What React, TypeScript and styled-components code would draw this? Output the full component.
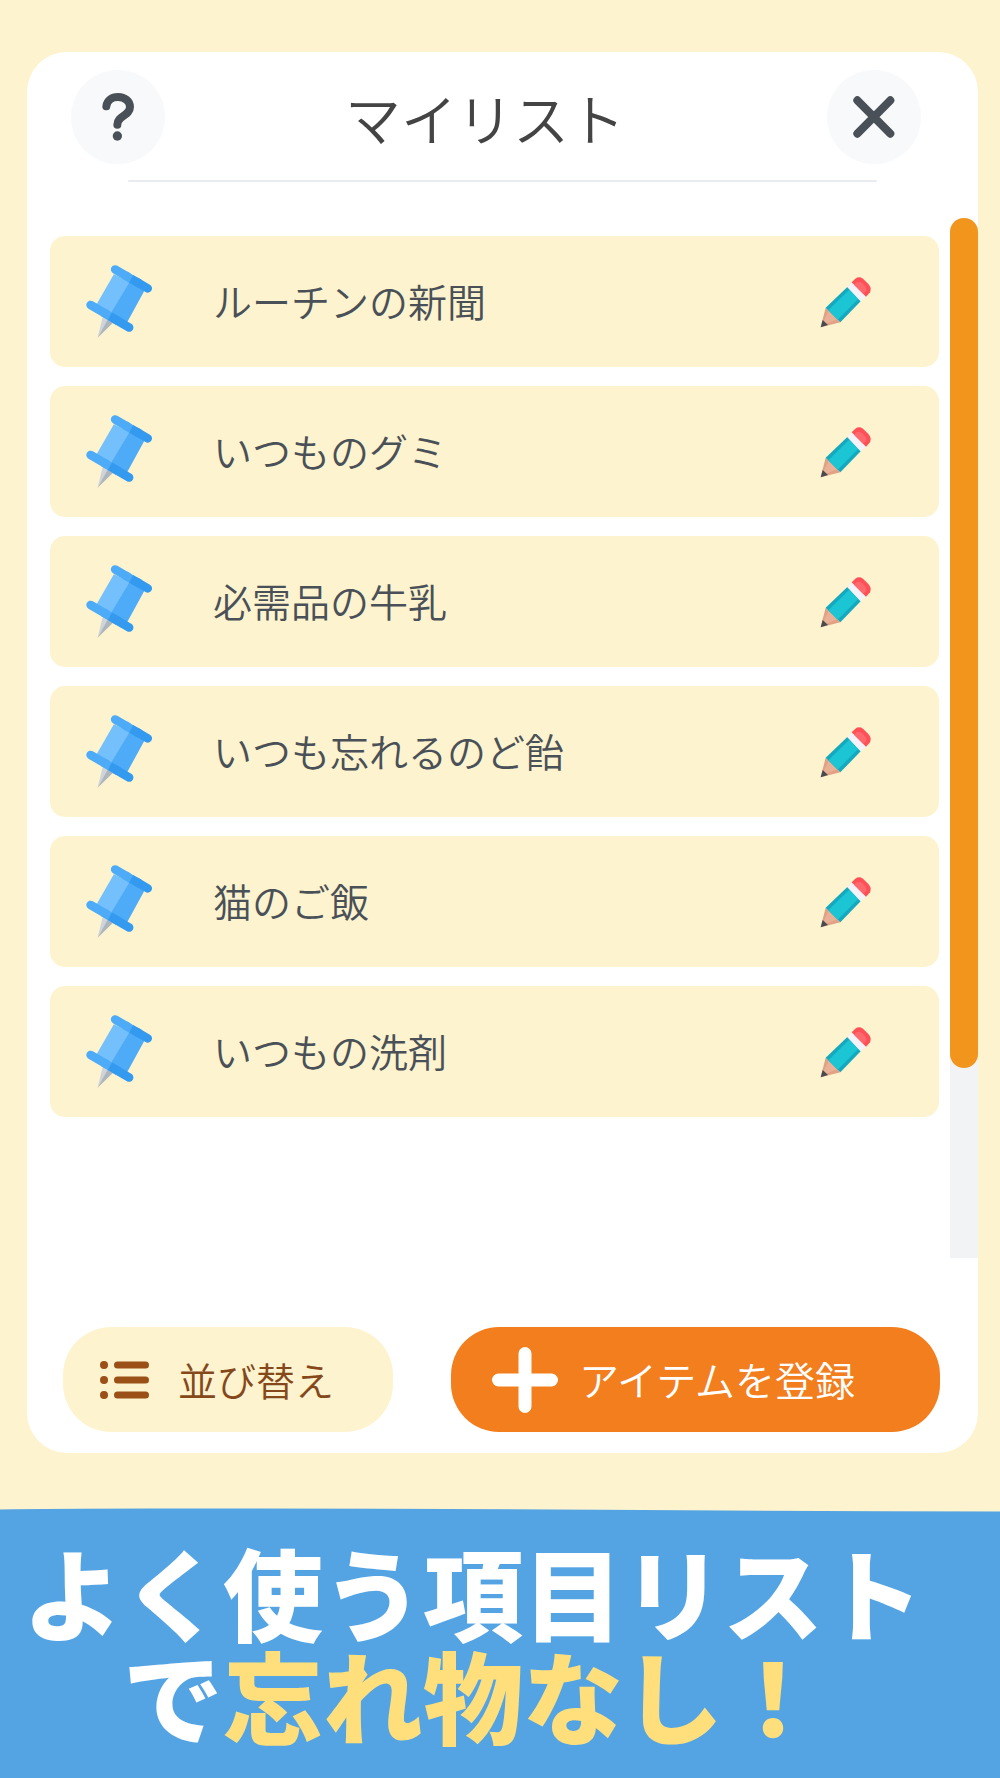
import React from "react";
import styled, { createGlobalStyle } from "styled-components";

const cream = "#fdf3ce";
const ink = "#495057";

const GlobalStyle = createGlobalStyle`
  *, *::before, *::after { box-sizing: border-box; }
  body {
    margin: 0;
    background: ${cream};
    font-family: "Noto Sans CJK JP", "Noto Sans", sans-serif;
    font-weight: 350;
  }
  button { border: 0; padding: 0; font: inherit; cursor: pointer; }
  svg { display: block; flex: none; }
`;

const Page = styled.div`
  display: flex;
  flex-direction: column;
  min-height: 100vh;
`;

const Card = styled.main`
  display: flex;
  flex-direction: column;
  margin: 52px 22px 55px 27px;
  padding-bottom: 21px;
  background: #fff;
  border-radius: 40px;
`;

const Header = styled.header`
  display: flex;
  align-items: center;
  padding: 18px 57px 16px 44px;
`;

const RoundButton = styled.button`
  width: 94px;
  height: 94px;
  border-radius: 50%;
  background: #f8f9fa;
`;

const Title = styled.h1`
  flex: 1;
  margin: 0;
  padding-right: 22px;
  text-align: center;
  font-size: 56px;
  line-height: 94px;
  font-weight: 350;
  color: #444;
`;

const Divider = styled.hr`
  align-self: stretch;
  height: 2px;
  margin: 0 101px 36px;
  border: 0;
  border-radius: 2px;
  background: #e9ecef;
`;

const Content = styled.section`
  display: flex;
  gap: 11px;
  padding-left: 23px;
`;

const List = styled.ul`
  flex: 1;
  display: flex;
  flex-direction: column;
  gap: 19px;
  margin: 0;
  padding: 18px 0 0;
  list-style: none;
`;

const Item = styled.li`
  display: flex;
  align-items: center;
  height: 131px;
  padding: 0 67px 0 35px;
  border-radius: 15px;
  background: ${cream};
`;

const ItemName = styled.span`
  flex: 1;
  padding: 0 0 4px 60px;
  font-size: 39px;
  line-height: 56px;
  color: ${ink};
`;

const EditButton = styled.button`
  background: none;
`;

const Track = styled.div`
  width: 28px;
  height: 1040px;
  border-radius: 14px 14px 0 0;
  background: #f1f3f5;
`;

const Thumb = styled.div`
  height: 850px;
  border-radius: 14px;
  background: #f1951d;
`;

const Footer = styled.footer`
  display: flex;
  gap: 58px;
  padding: 69px 38px 0 36px;
`;

const ActionButton = styled.button<{ $primary?: boolean }>`
  display: flex;
  align-items: center;
  flex: ${(p) => (p.$primary ? "1" : "0 0 330px")};
  gap: ${(p) => (p.$primary ? "21px" : "29px")};
  height: 105px;
  padding-left: ${(p) => (p.$primary ? "41px" : "37px")};
  border-radius: 48px;
  font-size: ${(p) => (p.$primary ? "40px" : "39px")};
  line-height: 56px;
  color: ${(p) => (p.$primary ? "#fff" : "#84481a")};
  background: ${(p) => (p.$primary ? "#f37e1e" : cream)};
`;

const ActionLabel = styled.span`
  padding-bottom: 2px;
`;

const Banner = styled.section`
  flex: 1;
  display: flex;
  flex-direction: column;
  color: #fff;
  background: linear-gradient(transparent 4px, #54a4e3 4px);
`;

const Slogan = styled.p`
  margin: 0;
  padding: 26px 54px 26px 0;
  text-align: center;
  font-size: 100px;
  line-height: 103px;
  font-weight: 900;
`;

const Line = styled.span`
  display: block;
  white-space: nowrap;
`;

const Accent = styled.em`
  font-style: normal;
  color: #ffdf7b;
`;

const QuestionIcon = () => (
  <svg width="94" height="94" viewBox="213 120 282 282" fill="none" aria-hidden="true">
    <path
      d="M319 229C321 211 336 201 354 201C375 201 390 214 390 231C390 257 352 258 352 284"
      stroke={ink}
      strokeWidth="24"
      strokeLinecap="round"
    />
    <circle cx="352" cy="318" r="14" fill={ink} />
  </svg>
);

const CloseIcon = () => (
  <svg width="94" height="94" viewBox="980 120 282 282" aria-hidden="true">
    <path d="M1071 211L1170 311M1170 211L1071 311" stroke={ink} strokeWidth="24" strokeLinecap="round" />
  </svg>
);

const PinIcon = () => (
  <svg width="68" height="75" viewBox="135 115 205 225" fill="none" aria-hidden="true">
    <path d="M188 275L204 283L173 337Z" fill="#ced4da" />
    <path d="M204 281L221 290L173 337Z" fill="#adb5bd" />
    <path d="M222 145L270 169L213 264L170 236Z" fill="#74c0fc" />
    <path d="M270 167L314 195L262 290L212 264Z" fill="#4dabf7" />
    <g strokeWidth="26" strokeLinecap="round">
      <path d="M226 131L262 152M152 238L200 266" stroke="#4dabf7" />
      <path d="M290 168L324 188M225 281L268 306" stroke="#339af0" />
    </g>
    <g strokeWidth="26">
      <path d="M256 148L275 160M190 260L211 273" stroke="#4dabf7" />
      <path d="M274 159L300 174M210 272L236 287" stroke="#339af0" />
    </g>
  </svg>
);

const PencilIcon = () => (
  <svg width="52" height="52" viewBox="120 152 156 156" aria-hidden="true">
    <path d="M137 247L181 291L122 306Z" fill="#e2a084" />
    <path d="M146 256L172 282L136 296L130 290Z" fill="#e8b094" />
    <path d="M128 284L144 299L122 306Z" fill="#464b52" />
    <path d="M202 185L242 228L181 291L137 247Z" fill="#14a9be" />
    <path d="M208 193L235 220L173 283L145 255Z" fill="#1cc5d4" />
    <path d="M202 185L216 171L259 213L242 228Z" fill="#f3f3f9" />
    <path d="M215 171L226 160Q237 152 249 160L265 176Q276 187 270 201L258 214Z" fill="#ff5058" />
    <path d="M222 178L229 171Q238 166 247 174L255 183Q261 190 258 198L249 205Z" fill="#ff686c" />
  </svg>
);

const ListIcon = () => (
  <svg width="49" height="40" viewBox="0 0 49 40" fill="none" aria-hidden="true">
    <g stroke="#9a5016" strokeLinecap="round">
      <path d="M4 5h0.01M4 20h0.01M4 35h0.01" strokeWidth="8" />
      <path d="M17.5 5h28M17.5 20h28M17.5 35h28" strokeWidth="7" />
    </g>
  </svg>
);

const PlusIcon = () => (
  <svg width="66" height="66" viewBox="0 0 66 66" aria-hidden="true">
    <path d="M33 6.5v53M6.5 33h53" stroke="#fff" strokeWidth="13" strokeLinecap="round" />
  </svg>
);

const BannerEdge = () => (
  <svg width="100%" height="5" viewBox="0 0 1000 5" preserveAspectRatio="none" aria-hidden="true">
    <path d="M0 1.5Q60 0.2 200 0.5Q400 0.5 600 1.8T1000 3.5V5H0Z" fill="#54a4e3" />
  </svg>
);

const items = [
  "ルーチンの新聞",
  "いつものグミ",
  "必需品の牛乳",
  "いつも忘れるのど飴",
  "猫のご飯",
  "いつもの洗剤",
];

export default function App() {
  return (
    <Page lang="ja">
      <GlobalStyle />
      <Card>
        <Header>
          <RoundButton type="button" aria-label="ヘルプ">
            <QuestionIcon />
          </RoundButton>
          <Title>マイリスト</Title>
          <RoundButton type="button" aria-label="閉じる">
            <CloseIcon />
          </RoundButton>
        </Header>
        <Divider />
        <Content>
          <List>
            {items.map((name) => (
              <Item key={name}>
                <PinIcon />
                <ItemName>{name}</ItemName>
                <EditButton type="button" aria-label={`${name}を編集`}>
                  <PencilIcon />
                </EditButton>
              </Item>
            ))}
          </List>
          <Track>
            <Thumb />
          </Track>
        </Content>
        <Footer>
          <ActionButton type="button">
            <ListIcon />
            <ActionLabel>並び替え</ActionLabel>
          </ActionButton>
          <ActionButton type="button" $primary>
            <PlusIcon />
            <ActionLabel>アイテムを登録</ActionLabel>
          </ActionButton>
        </Footer>
      </Card>
      <Banner>
        <BannerEdge />
        <Slogan>
          <Line>よく使う項目リスト</Line>
          <Line>
            で<Accent>忘れ物なし！</Accent>
          </Line>
        </Slogan>
      </Banner>
    </Page>
  );
}
